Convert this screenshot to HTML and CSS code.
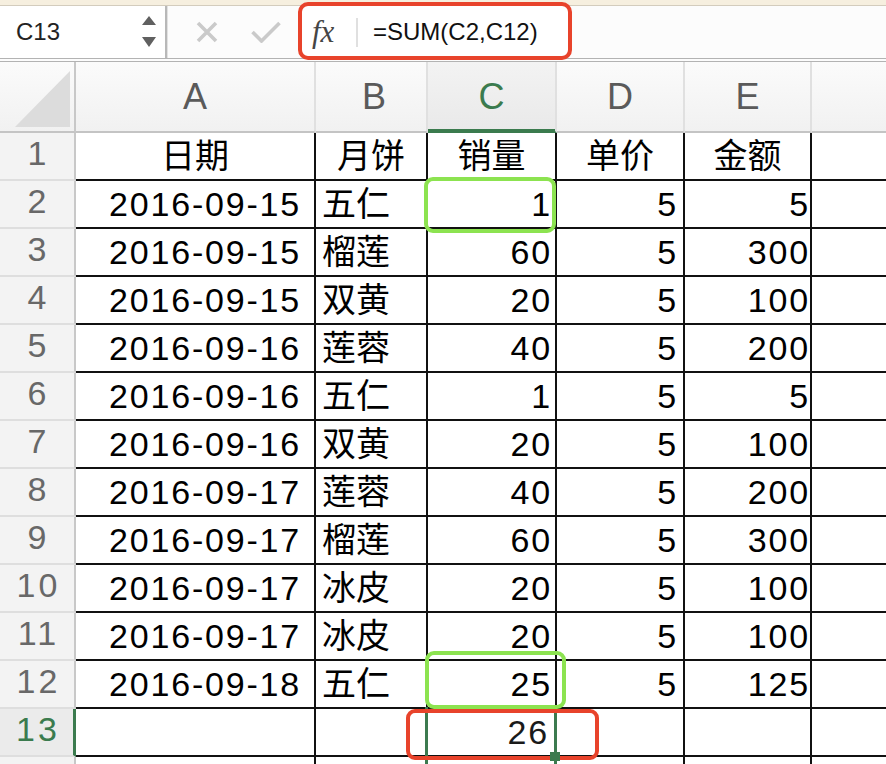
FILE: index.html
```html
<!DOCTYPE html>
<html lang="zh-CN">
<head>
<meta charset="utf-8">
<title>Sheet</title>
<link rel="stylesheet" href="styles.css">
</head>
<body>
<div class="page">
  <div class="top-strip"></div>
  <div class="fbar">
    <div class="namebox">
      <span class="name">C13</span>
      <svg class="spin" width="14" height="32" viewBox="0 0 14 32"><path d="M7 0 L14 9 L0 9 Z M0 21 L14 21 L7 31 Z" fill="#606060"/></svg>
    </div>
    <div class="actions">
      <svg width="22" height="22" viewBox="0 0 22 22"><path d="M2 2 L20 20 M20 2 L2 20" stroke="#cacaca" stroke-width="3.6" fill="none"/></svg>
      <svg width="30" height="22" viewBox="0 0 30 22"><path d="M1.5 11 L10.5 20 L28.5 2" stroke="#cacaca" stroke-width="3.6" fill="none"/></svg>
    </div>
    <div class="formula">
      <span class="fx">fx</span>
      <span class="fsep"></span>
      <span class="ftext">=SUM(C2,C12)</span>
    </div>
  </div>

  <div class="sheet">
    <div class="hrow">
      <div class="corner"><svg width="55" height="56" viewBox="0 0 55 56"><path d="M0 56 L55 56 L55 0 Z" fill="#dcdcdc"/></svg></div>
      <div class="hcell ca">A</div>
      <div class="hcell cb">B</div>
      <div class="hcell cc sel">C</div>
      <div class="hcell cd">D</div>
      <div class="hcell ce">E</div>
      <div class="hcell cf"></div>
    </div>

    <div class="row"><div class="rh">1</div><div class="c ca hd">日期</div><div class="c cb hd">月饼</div><div class="c cc hd">销量</div><div class="c cd hd">单价</div><div class="c ce hd">金额</div><div class="c cf"></div></div>
    <div class="row"><div class="rh">2</div><div class="c ca num">2016-09-15</div><div class="c cb">五仁</div><div class="c cc num">1</div><div class="c cd num">5</div><div class="c ce num">5</div><div class="c cf"></div></div>
    <div class="row"><div class="rh">3</div><div class="c ca num">2016-09-15</div><div class="c cb">榴莲</div><div class="c cc num">60</div><div class="c cd num">5</div><div class="c ce num">300</div><div class="c cf"></div></div>
    <div class="row"><div class="rh">4</div><div class="c ca num">2016-09-15</div><div class="c cb">双黄</div><div class="c cc num">20</div><div class="c cd num">5</div><div class="c ce num">100</div><div class="c cf"></div></div>
    <div class="row"><div class="rh">5</div><div class="c ca num">2016-09-16</div><div class="c cb">莲蓉</div><div class="c cc num">40</div><div class="c cd num">5</div><div class="c ce num">200</div><div class="c cf"></div></div>
    <div class="row"><div class="rh">6</div><div class="c ca num">2016-09-16</div><div class="c cb">五仁</div><div class="c cc num">1</div><div class="c cd num">5</div><div class="c ce num">5</div><div class="c cf"></div></div>
    <div class="row"><div class="rh">7</div><div class="c ca num">2016-09-16</div><div class="c cb">双黄</div><div class="c cc num">20</div><div class="c cd num">5</div><div class="c ce num">100</div><div class="c cf"></div></div>
    <div class="row"><div class="rh">8</div><div class="c ca num">2016-09-17</div><div class="c cb">莲蓉</div><div class="c cc num">40</div><div class="c cd num">5</div><div class="c ce num">200</div><div class="c cf"></div></div>
    <div class="row"><div class="rh">9</div><div class="c ca num">2016-09-17</div><div class="c cb">榴莲</div><div class="c cc num">60</div><div class="c cd num">5</div><div class="c ce num">300</div><div class="c cf"></div></div>
    <div class="row"><div class="rh">10</div><div class="c ca num">2016-09-17</div><div class="c cb">冰皮</div><div class="c cc num">20</div><div class="c cd num">5</div><div class="c ce num">100</div><div class="c cf"></div></div>
    <div class="row"><div class="rh">11</div><div class="c ca num">2016-09-17</div><div class="c cb">冰皮</div><div class="c cc num">20</div><div class="c cd num">5</div><div class="c ce num">100</div><div class="c cf"></div></div>
    <div class="row"><div class="rh">12</div><div class="c ca num">2016-09-18</div><div class="c cb">五仁</div><div class="c cc num">25</div><div class="c cd num">5</div><div class="c ce num">125</div><div class="c cf"></div></div>
    <div class="row"><div class="rh sel">13</div><div class="c ca"></div><div class="c cb"></div><div class="c cc num active">26</div><div class="c cd"></div><div class="c ce"></div><div class="c cf"></div></div>
    <div class="row short"><div class="rh">14</div><div class="c ca"></div><div class="c cb"></div><div class="c cc"></div><div class="c cd"></div><div class="c ce"></div><div class="c cf"></div></div>
  </div>

  <div class="sel-outline"></div>
  <div class="hl hl-red box-formula"></div>
  <div class="hl hl-green box-c2"></div>
  <div class="hl hl-green box-c12"></div>
  <div class="hl hl-red box-c13"></div>
  <div class="fill-handle"></div>
</div>
</body>
</html>
```

FILE: styles.css
```css
* { box-sizing: border-box; }
html, body { margin: 0; padding: 0; background: #fff; }
body { font-family: "Liberation Sans", "Noto Sans CJK SC", sans-serif; }

.page {
  position: relative;
  width: 886px;
  height: 764px;
  overflow: hidden;
  background: #fff;
}

/* top window strip */
.top-strip {
  height: 6px;
  background: #f6efdf;
  border-bottom: 1px solid #d3ccbd;
}

/* formula bar */
.fbar {
  height: 56px;
  display: flex;
  align-items: stretch;
  background: #fcfcfc;
  border-bottom: 4px double #b3b3b3;
}
.namebox {
  width: 167px;
  flex: none;
  display: flex;
  align-items: center;
  padding-left: 16px;
  padding-right: 9px;
  background: #fff;
  border-right: 2px solid #b8b8b8;
  box-shadow: 1px 0 0 #e2e2e2;
}
.name {
  font-size: 24px;
  color: #222;
}
.spin { margin-left: auto; }
.actions {
  display: flex;
  align-items: center;
  gap: 33px;
  padding-left: 29px;
  flex: none;
}
.formula {
  margin-left: 19px;
  width: 270px;
  flex: none;
  display: flex;
  align-items: center;
  padding-left: 12px;
  background: #fff;
}
.fx {
  font-family: "Liberation Serif", serif;
  font-style: italic;
  font-size: 31px;
  color: #454545;
  width: 44px;
  flex: none;
}
.fsep {
  width: 2px;
  height: 29px;
  background: #e0e0e0;
  flex: none;
}
.ftext {
  margin-left: 15px;
  font-size: 24px;
  color: #111;
}

/* column header */
.hrow {
  display: flex;
  height: 71px;
}
.corner {
  width: 76px;
  flex: none;
  display: flex;
  align-items: flex-end;
  justify-content: flex-end;
  padding: 0 4px 4px 0;
  background: linear-gradient(#fbfbfb, #f1f1f1);
  border-right: 2px solid #c8c8c8;
  border-bottom: 2px solid #c4c4c4;
}
.hcell {
  display: flex;
  align-items: center;
  justify-content: center;
  font-size: 36px;
  color: #5a5a5a;
  background: linear-gradient(#fbfbfb, #f1f1f1);
  border-right: 2px solid #e0e0e0;
  border-bottom: 2px solid #c4c4c4;
}
.hcell.sel {
  color: #3b7b4e;
  background: linear-gradient(#f3f3f3, #e9e9e9);
  border-bottom-color: #3b7b4e;
  box-shadow: inset 0 -2px 0 #3b7b4e;
}
.hcell.cf { border-right: none; }

/* rows */
.row {
  display: flex;
  height: 48px;
}
.row.short { height: 36px; }
.rh {
  width: 76px;
  flex: none;
  display: flex;
  align-items: center;
  justify-content: center;
  padding: 0 0 6px 3px;
  font-size: 34px;
  letter-spacing: 3px;
  color: #686868;
  background: #f3f3f3;
  border-right: 2px solid #c8c8c8;
  border-bottom: 2px solid #dedede;
}
.row.short .rh { align-items: flex-start; padding-top: 3px; }
.rh.sel {
  color: #3b7b4e;
  background: #ebebeb;
  border-right: 3px solid #3b7b4e;
}

.c {
  display: flex;
  align-items: center;
  font-size: 34px;
  line-height: 1;
  color: #000;
  border-right: 2px solid #111;
  border-bottom: 2px solid #111;
  white-space: nowrap;
}
.ca { width: 240px; flex: none; }
.cb { width: 112px; flex: none; padding-left: 6px; }
.cc { width: 129px; flex: none; }
.cd { width: 128px; flex: none; }
.ce { width: 127px; flex: none; }
.cf { flex: 1; border-right: none; }

.c.hd { justify-content: center; padding: 0; }
.c.num { justify-content: flex-end; letter-spacing: 1.8px; }
.ca.num { padding-right: 13px; }
.cc.num { padding-right: 3px; }
.cd.num { padding-right: 5px; }
.ce.num { padding-right: 0; }
.cc.active { padding-right: 6px; color: #1a1a1a; }

/* overlays: selection and annotation boxes */
.sel-outline {
  position: absolute;
  left: 425px;
  top: 707px;
  width: 132px;
  height: 57px;
  border-left: 3px solid #3c7a4f;
  border-right: 3px solid #3c7a4f;
}
.fill-handle {
  position: absolute;
  left: 550px;
  top: 752px;
  width: 10px;
  height: 9px;
  background: #3c7a4f;
}
.hl {
  position: absolute;
  border: 4px solid;
  border-radius: 9px;
}
.hl-red { border-color: #e8432b; }
.hl-green { border-color: #8ce350; }
.box-formula { left: 298px; top: 2px; width: 274px; height: 58px; border-radius: 10px; }
.box-c2 { left: 424px; top: 177px; width: 132px; height: 56px; }
.box-c12 { left: 425px; top: 651px; width: 141px; height: 58px; }
.box-c13 { left: 406px; top: 709px; width: 193px; height: 51px; }
```
